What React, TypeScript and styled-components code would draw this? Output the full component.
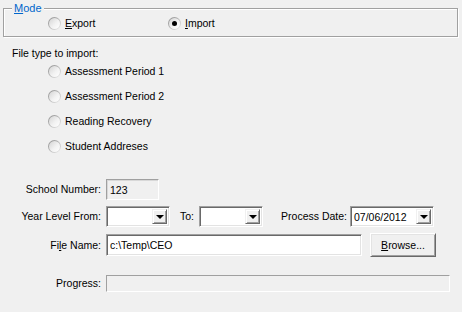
import React from "react";
import styled, { createGlobalStyle } from "styled-components";

const GlobalStyle = createGlobalStyle`
  html, body {
    margin: 0;
    padding: 0;
    background: #f0f0f0;
  }
  body {
    font-family: "Liberation Sans", Arial, sans-serif;
    font-size: 10.5px;
    color: #000;
  }
`;

const Page = styled.div`
  width: 462px;
  height: 312px;
  display: flex;
  flex-direction: column;
  overflow: hidden;
  background: #f0f0f0;
`;

const GroupBox = styled.div`
  position: relative;
  margin: 8px 0 0 3px;
  width: 455px;
  height: 29px;
  box-sizing: border-box;
  border: 1px solid #a0a0a0;
  box-shadow: 1px 1px 0 #fff, inset 1px 1px 0 #fff;
  display: flex;
  align-items: center;
  padding: 2px 0 0 44px;
`;

const Legend = styled.span`
  position: absolute;
  top: -7px;
  left: 8px;
  padding: 0 2px;
  line-height: 13px;
  font-size: 11px;
  background: #f0f0f0;
  color: #0066cc;
`;

const U = styled.span`
  text-decoration: underline;
  text-underline-offset: 1px;
`;

const RadioOption = styled.label<{ $w?: number }>`
  display: flex;
  align-items: center;
  gap: 4px;
  line-height: 13px;
  width: ${(p) => (p.$w ? `${p.$w}px` : "auto")};
`;

const RadioCircle = styled.span<{ $checked?: boolean }>`
  position: relative;
  width: 13px;
  height: 13px;
  box-sizing: border-box;
  border-radius: 50%;
  background: linear-gradient(135deg, #8c8c8c 0%, #b8b8b8 50%, #f2f2f2 100%);
  flex-shrink: 0;

  &::before {
    content: "";
    position: absolute;
    inset: 1px;
    border-radius: 50%;
    background: linear-gradient(135deg, #d4d4d4 0%, #f2f2f2 55%, #ffffff 100%);
  }

  &::after {
    content: "";
    display: ${(p) => (p.$checked ? "block" : "none")};
    position: absolute;
    left: 4px;
    top: 4px;
    width: 5px;
    height: 5px;
    border-radius: 50%;
    background: #000;
  }
`;

const SectionLabel = styled.div`
  margin: 10px 0 0 12px;
  line-height: 13px;
`;

const RadioList = styled.div`
  margin-top: 5px;
  padding-left: 48px;
  display: flex;
  flex-direction: column;
  gap: 12px;
`;

const FormRow = styled.div<{ $mt: number; $h: number }>`
  display: flex;
  align-items: center;
  margin-top: ${(p) => p.$mt}px;
  height: ${(p) => p.$h}px;
`;

const FieldLabel = styled.div<{ $w: number; $pr?: number }>`
  width: ${(p) => p.$w}px;
  box-sizing: border-box;
  padding-right: ${(p) => p.$pr ?? 5}px;
  text-align: right;
  white-space: nowrap;
  line-height: 13px;
  flex-shrink: 0;
`;

const sunken = `
  box-sizing: border-box;
  border: 1px solid;
  border-color: #a0a0a0 #ffffff #ffffff #a0a0a0;
  box-shadow: inset 1px 1px 0 #696969, inset -1px -1px 0 #e3e3e3;
`;

const ReadOnlyBox = styled.div`
  width: 53px;
  height: 21px;
  box-sizing: border-box;
  border: 1px solid;
  border-color: #a0a0a0 #ffffff #ffffff #a0a0a0;
  box-shadow: inset 1px 1px 0 #d8d8d8;
  background: #f0f0f0;
  padding: 1px 0 0 3px;
  display: flex;
  align-items: center;
`;

const TextInput = styled.div<{ $w: number; $h: number }>`
  ${sunken}
  width: ${(p) => p.$w}px;
  height: ${(p) => p.$h}px;
  background: #fff;
  padding-left: 3px;
  display: flex;
  align-items: center;
  flex-shrink: 0;
`;

const Combo = styled.div<{ $w: number }>`
  ${sunken}
  width: ${(p) => p.$w}px;
  height: 21px;
  background: #fff;
  padding: 2px;
  display: flex;
  align-items: stretch;
  flex-shrink: 0;
`;

const ComboText = styled.div`
  flex: 1;
  padding-left: 1px;
  display: flex;
  align-items: center;
`;

const DropButton = styled.div`
  width: 15px;
  box-sizing: border-box;
  background: #f0f0f0;
  border: 1px solid;
  border-color: #f0f0f0 #696969 #696969 #f0f0f0;
  box-shadow: inset 1px 1px 0 #fff, inset -1px -1px 0 #a0a0a0;
  display: flex;
  align-items: center;
  justify-content: center;

  &::after {
    content: "";
    border-left: 4px solid transparent;
    border-right: 4px solid transparent;
    border-top: 4px solid #000;
    margin-top: 1px;
  }
`;

const Button = styled.div`
  margin-left: 8px;
  width: 66px;
  height: 24px;
  box-sizing: border-box;
  background: #f0f0f0;
  border: 1px solid;
  border-color: #ffffff #696969 #696969 #ffffff;
  box-shadow: inset 1px 1px 0 #e3e3e3, inset -1px -1px 0 #a0a0a0;
  display: flex;
  align-items: center;
  justify-content: center;
  line-height: 13px;
`;

const ProgressBar = styled.div`
  width: 344px;
  height: 17px;
  box-sizing: border-box;
  border: 1px solid;
  border-color: #a0a0a0 #ffffff #ffffff #a0a0a0;
  background: #f0f0f0;
`;

const fileTypes = [
  "Assessment Period 1",
  "Assessment Period 2",
  "Reading Recovery",
  "Student Addreses",
];

export default function App() {
  return (
    <>
      <GlobalStyle />
      <Page>
        <GroupBox>
          <Legend>
            <U>M</U>ode
          </Legend>
          <RadioOption $w={120}>
            <RadioCircle />
            <span>
              <U>E</U>xport
            </span>
          </RadioOption>
          <RadioOption>
            <RadioCircle $checked />
            <span>
              <U>I</U>mport
            </span>
          </RadioOption>
        </GroupBox>

        <SectionLabel>File type to import:</SectionLabel>
        <RadioList>
          {fileTypes.map((t) => (
            <RadioOption key={t}>
              <RadioCircle />
              <span>{t}</span>
            </RadioOption>
          ))}
        </RadioList>

        <FormRow $mt={26} $h={21}>
          <FieldLabel $w={106}>School Number:</FieldLabel>
          <ReadOnlyBox>123</ReadOnlyBox>
        </FormRow>

        <FormRow $mt={6} $h={21}>
          <FieldLabel $w={106}>Year Level From:</FieldLabel>
          <Combo $w={64}>
            <ComboText />
            <DropButton />
          </Combo>
          <FieldLabel $w={29}>To:</FieldLabel>
          <Combo $w={64}>
            <ComboText />
            <DropButton />
          </Combo>
          <FieldLabel $w={87} $pr={3}>
            Process Date:
          </FieldLabel>
          <Combo $w={84}>
            <ComboText>07/06/2012</ComboText>
            <DropButton />
          </Combo>
        </FormRow>

        <FormRow $mt={6} $h={24}>
          <FieldLabel $w={106}>
            Fi<U>l</U>e Name:
          </FieldLabel>
          <TextInput $w={256} $h={22}>
            c:\Temp\CEO
          </TextInput>
          <Button>
            <span>
              <U>B</U>rowse...
            </span>
          </Button>
        </FormRow>

        <FormRow $mt={18} $h={17}>
          <FieldLabel $w={106}>Progress:</FieldLabel>
          <ProgressBar />
        </FormRow>
      </Page>
    </>
  );
}
